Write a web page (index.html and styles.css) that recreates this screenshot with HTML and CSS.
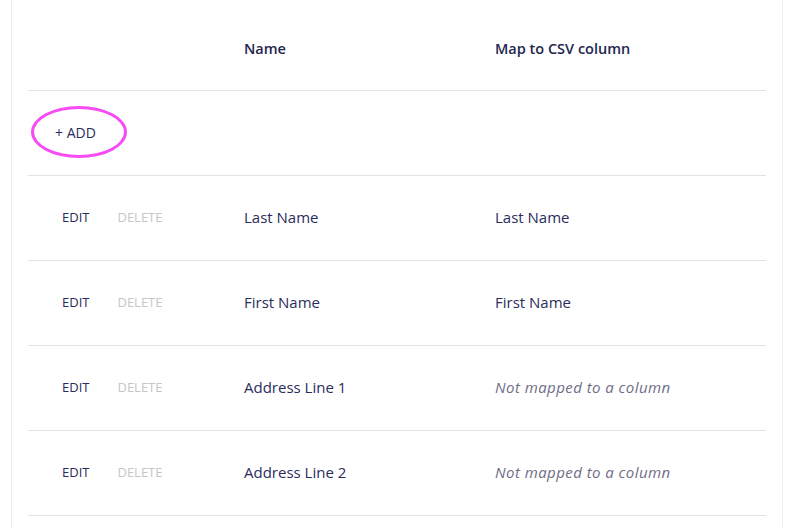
FILE: index.html
```html
<!DOCTYPE html>
<html lang="en">
<head>
<meta charset="utf-8">
<title>Field mapping</title>
<link rel="stylesheet" href="styles.css">
</head>
<body>
<div class="card">
  <div class="row head">
    <div class="cell actions"></div>
    <div class="cell">Name</div>
    <div class="cell">Map to CSV column</div>
  </div>
  <div class="row">
    <div class="cell actions add-cell">
      <span class="btn add">+ ADD</span>
      <span class="ring"></span>
    </div>
    <div class="cell"></div>
    <div class="cell"></div>
  </div>
  <div class="row">
    <div class="cell actions"><span class="btn">EDIT</span><span class="btn del">DELETE</span></div>
    <div class="cell">Last Name</div>
    <div class="cell">Last Name</div>
  </div>
  <div class="row">
    <div class="cell actions"><span class="btn">EDIT</span><span class="btn del">DELETE</span></div>
    <div class="cell">First Name</div>
    <div class="cell">First Name</div>
  </div>
  <div class="row">
    <div class="cell actions"><span class="btn">EDIT</span><span class="btn del">DELETE</span></div>
    <div class="cell">Address Line 1</div>
    <div class="cell muted">Not mapped to a column</div>
  </div>
  <div class="row">
    <div class="cell actions"><span class="btn">EDIT</span><span class="btn del">DELETE</span></div>
    <div class="cell">Address Line 2</div>
    <div class="cell muted">Not mapped to a column</div>
  </div>
  <div class="row">
    <div class="cell actions"></div>
    <div class="cell"></div>
    <div class="cell"></div>
  </div>
</div>
</body>
</html>
```
FILE: styles.css
```css
html, body {
  margin: 0;
  padding: 0;
  background: #ffffff;
}
body {
  font-family: "Open Sans", "Noto Sans", sans-serif;
  font-size: 15px;
  color: #2a2d5c;
  overflow: hidden;
}
.card {
  box-sizing: border-box;
  width: 772px;
  margin-left: 11px;
  padding: 0 16px;
  border-left: 1px solid #ececec;
  border-right: 1px solid #ececec;
  min-height: 600px;
}
.row {
  display: grid;
  grid-template-columns: 200px 251px 1fr;
  height: 85px;
  box-sizing: border-box;
  padding-bottom: 2px;
  align-items: center;
  border-bottom: 1px solid #e2e2e2;
}
.row.head {
  height: 91px;
  padding-top: 6px;
  padding-bottom: 0;
  font-size: 14.5px;
  font-weight: 600;
  color: #22264f;
}
.cell {
  padding-left: 16px;
}
.actions {
  display: flex;
  align-items: center;
  gap: 28px;
  padding-left: 34px;
}
.add-cell {
  position: relative;
  padding-left: 27px;
}
.btn {
  font-size: 13px;
  color: #2a2d5c;
}
.btn.add {
  font-size: 14px;
}
.btn.del {
  color: #c6c6c6;
}
.muted {
  font-style: italic;
  color: #6e6d86;
  letter-spacing: 0.45px;
}
.ring {
  position: absolute;
  left: 3px;
  top: 50%;
  width: 90px;
  height: 46px;
  margin-top: -26px;
  border: 3px solid #f54cf5;
  border-radius: 50%;
  pointer-events: none;
}
```
